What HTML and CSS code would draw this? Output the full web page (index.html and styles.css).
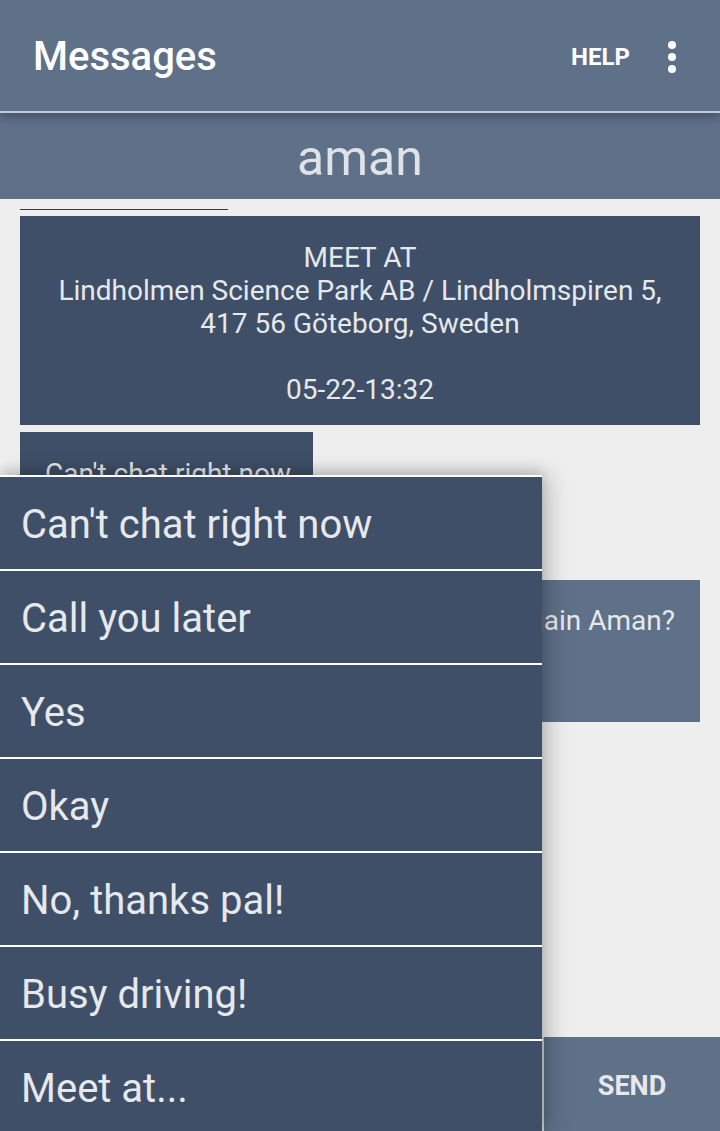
FILE: index.html
```html
<!DOCTYPE html>
<html>
<head>
<meta charset="utf-8">
<link rel="stylesheet" href="styles.css">
</head>
<body>
<div class="screen">
  <header class="appbar">
    <div class="appbar-title">Messages</div>
    <div class="appbar-actions">
      <span class="help">HELP</span>
      <span class="kebab"><i></i><i></i><i></i></span>
    </div>
  </header>
  <div class="contact">aman</div>
  <main class="chat">
    <div class="rule"></div>
    <div class="msg msg-in msg-wide">
      <p>MEET AT</p>
      <p>Lindholmen Science Park AB / Lindholmspiren 5,</p>
      <p>417 56 Göteborg, Sweden</p>
      <p>&nbsp;</p>
      <p>05-22-13:32</p>
    </div>
    <div class="msg msg-in msg-left">
      <p>Can't chat right now</p>
      <p>&nbsp;</p>
      <p>05-22-13:33</p>
    </div>
    <div class="msg msg-out">
      <p>Can we meet again Aman?</p>
      <p>&nbsp;</p>
      <p>05-22-13:34</p>
    </div>
  </main>
  <footer class="bottombar">
    <div class="input"></div>
    <div class="send">SEND</div>
  </footer>
  <ul class="quick-menu">
    <li>Can't chat right now</li>
    <li>Call you later</li>
    <li>Yes</li>
    <li>Okay</li>
    <li>No, thanks pal!</li>
    <li>Busy driving!</li>
    <li>Meet at...</li>
  </ul>
</div>
</body>
</html>
```
FILE: styles.css
```css
* { box-sizing: border-box; }
html, body { margin: 0; padding: 0; }
body {
  width: 720px;
  height: 1131px;
  overflow: hidden;
  background: #eeeeee;
  font-family: Roboto, "Liberation Sans", sans-serif;
}
.screen {
  position: relative;
  width: 720px;
  height: 1131px;
  display: flex;
  flex-direction: column;
  overflow: hidden;
}
.appbar {
  height: 113px;
  flex: none;
  background: #5f7089;
  border-bottom: 2px solid #c6ccd6;
  display: flex;
  align-items: center;
  justify-content: space-between;
  padding: 2px 0 0 33px;
  position: relative;
  z-index: 2;
  box-shadow: 0 4px 8px rgba(20, 30, 50, 0.35);
}
.appbar-title {
  color: #ffffff;
  font-size: 40px;
  font-weight: 500;
}
.appbar-actions {
  display: flex;
  align-items: center;
  height: 100%;
}
.help {
  color: #ffffff;
  font-weight: 700;
  font-size: 24px;
  margin-right: 38px;
}
.kebab {
  display: flex;
  flex-direction: column;
  gap: 4px;
  width: 52px;
  align-items: flex-start;
}
.kebab i {
  display: block;
  width: 8px;
  height: 8px;
  border-radius: 50%;
  background: #ffffff;
}
.contact {
  height: 86px;
  flex: none;
  background: #5f7089;
  color: #dfe2e7;
  font-size: 50px;
  display: flex;
  align-items: center;
  justify-content: center;
  padding-top: 4px;
}
.chat {
  flex: 1;
  padding: 10px 20px 0;
  display: flex;
  flex-direction: column;
  align-items: flex-start;
  gap: 7px;
}
.rule {
  width: 208px;
  height: 1px;
  background: #3a3a3a;
  margin-bottom: -1px;
}
.msg {
  padding: 25px 25px 19px;
  color: #e6e8ec;
  font-size: 28px;
  line-height: 33px;
}
.msg p { margin: 0; white-space: nowrap; }
.msg-in { background: #3e4f67; }
.msg-wide {
  align-self: stretch;
  text-align: center;
}
.msg-left {
  padding-right: 22px;
  padding-bottom: 17px;
}
.msg-out {
  align-self: flex-end;
  background: #5f7089;
  padding-top: 24px;
}
.bottombar {
  height: 94px;
  flex: none;
  display: flex;
}
.input {
  flex: 1;
  background: #f4f4f4;
  border-right: 2px solid #cfd3d9;
}
.send {
  width: 176px;
  background: #5f7089;
  color: #e6e8ec;
  font-weight: 700;
  font-size: 27px;
  display: flex;
  align-items: center;
  justify-content: center;
  padding-top: 4px;
}
.quick-menu {
  position: absolute;
  left: 0;
  top: 475px;
  width: 542px;
  margin: 0;
  padding: 0;
  list-style: none;
  z-index: 3;
  box-shadow: 6px 0 22px rgba(0, 0, 0, 0.22), 0 -4px 10px rgba(0, 0, 0, 0.12);
}
.quick-menu li {
  height: 94px;
  border-top: 2px solid #ffffff;
  background: #3e4f67;
  color: #e6e8ec;
  font-size: 40px;
  padding: 3px 0 0 21px;
  display: flex;
  align-items: center;
}
```
